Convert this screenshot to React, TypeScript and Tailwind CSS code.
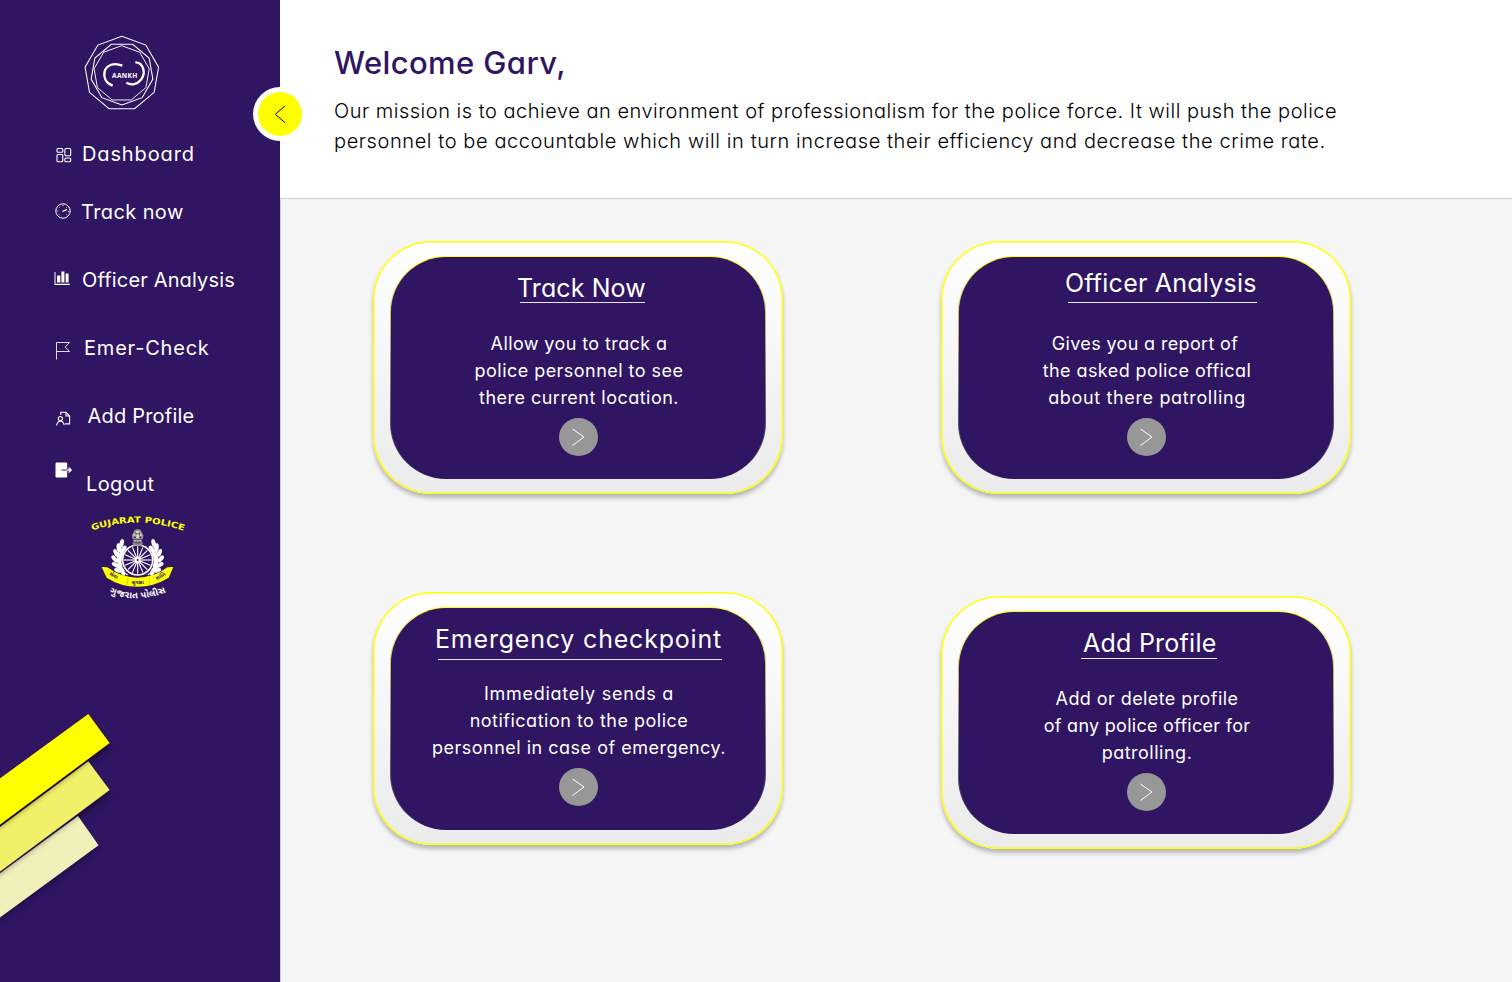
import React from 'react'

type Line = { text: string; tracking: string }

type CardData = {
  title: string
  titleClass: string
  ruleClass: string
  headClass: string
  cardClass: string
  lines: Line[]
}

const cards: CardData[] = [
  {
    title: 'Track Now',
    titleClass: 'ml-[126px] tracking-[0.1px]',
    ruleClass: 'ml-[129px] w-[125px]',
    headClass: 'h-[73px] pt-[17px]',
    cardClass: '',
    lines: [
      { text: 'Allow you to track a', tracking: 'tracking-[0.4px]' },
      { text: 'police personnel to see', tracking: 'tracking-[0.46px]' },
      { text: 'there current location.', tracking: 'tracking-[0.48px]' },
    ],
  },
  {
    title: 'Officer Analysis',
    titleClass: 'ml-[106px] tracking-[0.23px]',
    ruleClass: 'ml-[109px] mt-[5px] w-[189px]',
    headClass: 'h-[73px] pt-3',
    cardClass: '',
    lines: [
      { text: 'Gives you a report of', tracking: 'mr-[4px] tracking-[0.35px]' },
      { text: 'the asked police offical', tracking: 'tracking-[0.42px]' },
      { text: 'about there patrolling', tracking: 'tracking-[0.65px]' },
    ],
  },
  {
    title: 'Emergency checkpoint',
    titleClass: 'ml-[44px] tracking-[0.8px]',
    ruleClass: 'ml-[47px] mt-[6px] w-[284px]',
    headClass: 'h-[72px] pt-[17px]',
    cardClass: '',
    lines: [
      { text: 'Immediately sends a', tracking: 'tracking-[0.72px]' },
      { text: 'notification to the police', tracking: 'tracking-[0.5px]' },
      { text: 'personnel in case of emergency.', tracking: 'tracking-[0.5px]' },
    ],
  },
  {
    title: 'Add Profile',
    titleClass: 'ml-[124px] tracking-[0.25px]',
    ruleClass: 'ml-[122px] mt-px w-[136px]',
    headClass: 'h-[73px] pt-[17px]',
    cardClass: 'mt-1',
    lines: [
      { text: 'Add or delete profile', tracking: 'tracking-[0.42px]' },
      { text: 'of any police officer for', tracking: 'tracking-[0.28px]' },
      { text: 'patrolling.', tracking: 'tracking-[0.5px]' },
    ],
  },
]

function Card({ card }: { card: CardData }) {
  return (
    <article
      className={`h-[253px] w-[410px] rounded-[58px] bg-linear-to-b from-white to-[#ebebeb] px-[17px] pt-[15px] shadow-[inset_0_0_0_1.5px_#ffff00,0_4px_4px_rgba(0,0,0,0.25)] ${card.cardClass}`}
    >
      <div className="h-[223px] w-[376px] rounded-[56px] bg-linear-to-b from-[#ffff00] to-[#2f1562] p-px">
        <div className="flex h-full flex-col rounded-[55px] bg-[#2f1562] text-white">
          <div className={card.headClass}>
            <h2 className={`text-[25px] leading-7 whitespace-nowrap ${card.titleClass}`}>{card.title}</h2>
            <div className={`h-px bg-white/90 ${card.ruleClass}`} />
          </div>
          <div className="flex flex-col items-center pl-[2px] text-lg leading-[27px] whitespace-nowrap">
            {card.lines.map((l) => (
              <span key={l.text} className={l.tracking}>
                {l.text}
              </span>
            ))}
          </div>
          <button aria-label={card.title} className="mt-[7px] self-center pl-px">
            <svg className="h-[38px] w-[39px]" viewBox="0 0 39 38" fill="none">
              <ellipse cx="19.5" cy="19" rx="19.5" ry="19" fill="#979797" />
              <path d="M13.5 11 L25 19 L13.5 27.5" stroke="#fff" strokeWidth="1" />
            </svg>
          </button>
        </div>
      </div>
    </article>
  )
}

function polygon(cx: number, cy: number, r: number, down = false) {
  return Array.from({ length: 9 }, (_, i) => {
    const a = ((i * 40 + (down ? 90 : -90)) * Math.PI) / 180
    return `${(cx + r * Math.cos(a)).toFixed(1)},${(cy + r * Math.sin(a)).toFixed(1)}`
  }).join(' ')
}

function Logo() {
  return (
    <svg className="h-[100px] w-[110px]" viewBox="0 0 330 300" fill="none" stroke="#fff">
      <g strokeWidth="3.2">
        <polygon points={polygon(155.5, 146, 112)} />
        <polygon points={polygon(156, 146, 94, true)} />
        <polygon points={polygon(155, 146, 84)} strokeWidth="2.8" />
      </g>
      <path d="M157 122 C132 111 110 120 104 139 C100 158 108 175 128 182" strokeWidth="7" />
      <path d="M196 112 C221 112 229 146 212 165 C202 178 184 182 169 173" strokeWidth="7" />
      <text x="126" y="159" fill="#fff" stroke="none" fontSize="20" fontWeight="700" fontFamily="Open Sans, sans-serif" textLength="76">
        AANKH
      </text>
    </svg>
  )
}

const iconClass = 'size-[18px] shrink-0'

function DashboardIcon() {
  return (
    <svg className={iconClass} viewBox="0 0 18 18" fill="none" stroke="#fff" strokeWidth="1.1">
      <rect x="2" y="2.5" width="5.8" height="3.7" rx="1" />
      <rect x="2" y="8.5" width="5.8" height="7.3" rx="1" />
      <rect x="9.9" y="2.5" width="5.8" height="7.2" rx="1" />
      <rect x="9.9" y="12" width="5.8" height="3.8" rx="1" />
    </svg>
  )
}

function GaugeIcon() {
  return (
    <svg className={iconClass} viewBox="0 0 18 18" fill="none" stroke="#fff" strokeWidth="1">
      <circle cx="9" cy="9" r="7.2" />
      <path d="M8.5 9.5 L13 7.3" strokeWidth="1.3" />
      <path d="M9 3v1.2M4.8 4.8l.8.8M13.2 4.8l-.8.8M3 9h1.2M13.8 9.5H15M4.8 13l.8-.7M13.2 13l-.8-.7" strokeWidth=".8" />
    </svg>
  )
}

function ChartIcon() {
  return (
    <svg className={iconClass} viewBox="0 0 18 18" fill="#fff">
      <path d="M1.5 3h1v11.8h14.2V16H1.5z" />
      <path d="M4 6.5h3.3v7H4zM8.4 2.5h3v11h-3zM12.6 4.5h3v9h-3z" />
    </svg>
  )
}

function FlagIcon() {
  return (
    <svg className="h-[19px] w-[18px] shrink-0" viewBox="0 0 18 19" fill="none" stroke="#fff" strokeOpacity=".85" strokeWidth="1">
      <path d="M2.5 18.5V1.5H15.5L11.2 6L15.5 10.5H2.5" />
    </svg>
  )
}

function ProfileIcon() {
  return (
    <svg className={iconClass} viewBox="0 0 18 18" fill="none" stroke="#fff" strokeWidth="1.1">
      <path d="M6.8 6V3.3H12L15.6 7V14.9H11" />
      <path d="M12 3.3V7H15.6" />
      <circle cx="6.4" cy="9.6" r="2.1" />
      <path d="M2.6 16.5C3 13.8 4.2 12.2 6.4 12.2S9.8 13.8 10.2 16.2" />
    </svg>
  )
}

function LogoutIcon() {
  return (
    <svg className="h-[18px] w-[19px] shrink-0" viewBox="0 0 19 18" fill="none">
      <rect x="1.5" y="1.5" width="11.7" height="15" rx="1.3" fill="#fff" />
      <path d="M7.5 9H13" stroke="#2f1562" strokeOpacity=".75" strokeWidth="1.3" />
      <path d="M13 9H17M14.7 6.5L17.2 9L14.7 11.5" stroke="#fff" strokeWidth="1.3" />
    </svg>
  )
}

const nav = [
  { label: 'Dashboard', icon: <DashboardIcon />, row: 'mt-0', iconPos: 'ml-[55px] mt-[7px]', text: 'ml-[9px] tracking-[0.87px]' },
  { label: 'Track now', icon: <GaugeIcon />, row: 'mt-7', iconPos: 'ml-[54px] mt-[5px]', text: 'ml-[9px] tracking-[0.4px]' },
  { label: 'Officer Analysis', icon: <ChartIcon />, row: 'mt-[38px]', iconPos: 'ml-[53px] mt-[4px]', text: 'ml-[11px] tracking-[0.16px]' },
  { label: 'Emer-Check', icon: <FlagIcon />, row: 'mt-[38px]', iconPos: 'ml-[54px] mt-[8px]', text: 'ml-[12px] tracking-[0.8px]' },
  { label: 'Add Profile', icon: <ProfileIcon />, row: 'mt-[38px]', iconPos: 'ml-[54px] mt-[8px]', text: 'ml-[15.5px] tracking-[0.2px]' },
  { label: 'Logout', icon: <LogoutIcon />, row: 'mt-[38px]', iconPos: 'ml-[54px] mt-[-8px]', text: 'ml-[13px] tracking-[0.4px]' },
]

function Leaves() {
  const leaves = [
    [-58, 38, -75], [-66, 22, -60], [-69, 4, -40], [-65, -14, -25], [-57, -30, -5], [-48, -43, 15],
    [-45, 42, -20], [-52, 26, -5], [-54, 8, 10], [-50, -10, 25], [-43, -25, 40],
  ]
  return (
    <>
      {leaves.map(([x, y, r], i) => (
        <ellipse key={i} cx={x} cy={y} rx="6.4" ry="13" transform={`rotate(${r} ${x} ${y})`} />
      ))}
      <path d="M-30 52C-60 36 -68 0 -50 -34" fill="none" stroke="#fff" strokeWidth="4" />
    </>
  )
}

function Emblem() {
  return (
    <svg className="h-[105px] w-[115px] overflow-visible" viewBox="0 0 345 315" fontFamily="DejaVu Sans, sans-serif">
      <defs>
        <path id="top-arc" d="M37 77 Q172 27 322 81" />
        <path id="ribbon-left" d="M82 205 Q110 226 142 234" />
        <path id="ribbon-right" d="M210 233 Q240 224 266 203" />
        <path id="bottom-arc" d="M88 264 Q172 298 264 260" />
      </defs>
      <text fill="#ffff00" fontSize="25" fontWeight="700">
        <textPath href="#top-arc" textLength="280" lengthAdjust="spacingAndGlyphs">
          GUJARAT POLICE
        </textPath>
      </text>
      <g fill="#fff" transform="translate(173 158)">
        <Leaves />
        <g transform="scale(-1 1)">
          <Leaves />
        </g>
      </g>
      <circle cx="173" cy="165" r="45" fill="#2f1562" stroke="#fff" strokeWidth="5" />
      <g stroke="#fff" strokeWidth="3.4">
        {Array.from({ length: 16 }, (_, i) => (
          <line key={i} x1="173" y1="165" x2="173" y2="124" transform={`rotate(${i * 22.5} 173 165)`} />
        ))}
      </g>
      <circle cx="173" cy="165" r="9" fill="#fff" />
      <circle cx="173" cy="165" r="3" fill="#2f1562" />
      <g fill="#8f8d8c">
        <path d="M157 112h32l-3 10h-26zM160 104h26v6h-26z" />
        <path d="M159 103c-5-7-4-15 1-20 2-8 7-11 13-11s11 3 13 11c5 5 6 13 1 20z" />
      </g>
      <g fill="#d8d5cf">
        <path d="M168 78h10v6h-10zM161 86h5v7h-5zM180 86h5v7h-5zM169 88h8v12h-8zM163 105h4v4h-4zM171 105h4v4h-4zM179 105h4v4h-4z" />
      </g>
      <g fill="#26203a">
        <path d="M167 85h3v3h-3zM176 85h3v3h-3zM163 95h4v4h-4zM179 95h4v4h-4zM164 113h18v2h-18z" />
      </g>
      <path d="M65 186L82 187Q120 216 172 218Q226 216 262 187L280 186L266 218Q222 245 172 245Q122 245 80 218Z" fill="#ffff00" />
      <path d="M142 220V240M208 220V240" stroke="#b5a600" strokeWidth="1.5" />
      <g fill="#2f1562" fontFamily="Noto Sans Gujarati, Noto Sans, sans-serif" fontSize="16" fontWeight="700">
        <text>
          <textPath href="#ribbon-left" startOffset="6">સેવા</textPath>
        </text>
        <text x="173" y="236" textAnchor="middle">સુરક્ષા</text>
        <text>
          <textPath href="#ribbon-right" startOffset="22">શાંતિ</textPath>
        </text>
      </g>
      <text fill="#fff" fontFamily="Noto Sans Gujarati, Noto Sans, sans-serif" fontSize="28" fontWeight="700">
        <textPath href="#bottom-arc" textLength="174">ગુજરાત પોલીસ</textPath>
      </text>
    </svg>
  )
}

function Stripes() {
  return (
    <svg className="h-[230px] w-[130px] drop-shadow-[0_4px_2px_rgba(0,0,0,0.25)]" viewBox="0 0 130 230">
      <defs>
        <filter id="stripe-shadow" x="-20%" y="-20%" width="140%" height="140%">
          <feDropShadow dx="0" dy="4" stdDeviation="2" floodColor="#000" floodOpacity=".25" />
        </filter>
      </defs>
      <path d="M78 116L98.6 145.3L-20 232V188Z" fill="#f1f0ba" />
      <path d="M88.3 61.3L109.6 90L-20 186.4V142Z" fill="#f1f069" filter="url(#stripe-shadow)" />
      <path d="M88.3 14L109.6 43L-20 139.5V93Z" fill="#ffff00" filter="url(#stripe-shadow)" />
    </svg>
  )
}

export default function App() {
  return (
    <div className="flex h-[982px] w-[1512px] overflow-hidden bg-[#f5f5f5] font-['Inter',sans-serif] [font-feature-settings:'cv11']">
      <aside className="relative flex w-[280px] shrink-0 flex-col bg-[#2f1562] text-white">
        <div className="ml-[70px] mt-[25px] h-[100px]">
          <Logo />
        </div>
        <nav className="mt-[14px] flex flex-col">
          {nav.map((n) => (
            <a key={n.label} className={`flex h-[30px] items-start text-xl leading-[30px] whitespace-nowrap ${n.row}`}>
              <span className={n.iconPos}>{n.icon}</span>
              <span className={n.text}>{n.label}</span>
            </a>
          ))}
        </nav>
        <div className="ml-20 mt-[6px] h-[105px]">
          <Emblem />
        </div>
        <div className="mt-[90px]">
          <Stripes />
        </div>
        <button
          aria-label="Collapse sidebar"
          className="absolute top-[87px] left-[253px] flex size-[54px] items-center justify-center rounded-full bg-white"
        >
          <svg className="h-[44px] w-[44px]" viewBox="0 0 44 44" fill="none">
            <circle cx="22" cy="22" r="22" fill="#ffff00" />
            <path d="M27 14L17.3 22.3L27 30.7" stroke="#000" strokeWidth="1" />
          </svg>
        </button>
      </aside>
      <main className="flex flex-1 flex-col">
        <header className="h-[198px] bg-white pt-[43px] pl-[54px]">
          <h1 className="text-[31px] leading-10 font-medium tracking-[0.39px] text-[#2f1562]">Welcome Garv,</h1>
          <p className="mt-[13px] flex flex-col text-xl leading-[30px] font-light whitespace-nowrap text-black">
            <span className="tracking-[0.51px]">
              Our mission is to achieve an environment of professionalism for the police force. It will push the police
            </span>
            <span className="tracking-[0.59px]">
              personnel to be accountable which will in turn increase their efficiency and decrease the crime rate.
            </span>
          </p>
        </header>
        <section className="grid flex-1 grid-cols-[410px_410px] content-start gap-x-[158px] gap-y-[94px] border-t border-l border-[#d3cfd6] pt-[42px] pl-[92px]">
          {cards.map((c, i) => (
            <div key={c.title} className={i > 1 ? 'mt-1' : ''}>
              <Card card={c} />
            </div>
          ))}
        </section>
      </main>
    </div>
  )
}
